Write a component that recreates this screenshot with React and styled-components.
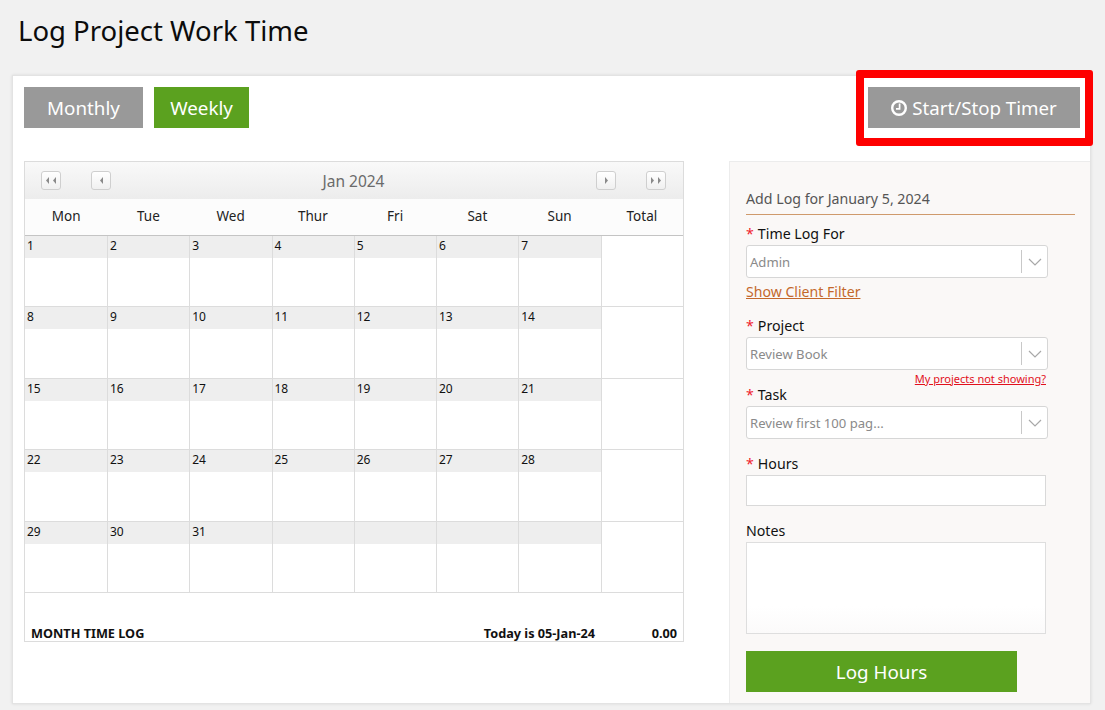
import React from 'react';
import styled, { createGlobalStyle } from 'styled-components';

const weekDays = ['Mon', 'Tue', 'Wed', 'Thur', 'Fri', 'Sat', 'Sun', 'Total'];

const weeks = [
  [1, 2, 3, 4, 5, 6, 7],
  [8, 9, 10, 11, 12, 13, 14],
  [15, 16, 17, 18, 19, 20, 21],
  [22, 23, 24, 25, 26, 27, 28],
  [29, 30, 31, '', '', '', ''],
];

const GlobalStyle = createGlobalStyle`
  html, body {
    margin: 0;
    padding: 0;
    height: 710px;
    overflow: hidden;
    background: #f1f1f1;
  }

  * {
    box-sizing: border-box;
  }
`;

const Page = styled.div`
  width: 1105px;
  height: 710px;
  overflow: hidden;
  font-family: 'Noto Sans', 'Open Sans', sans-serif;
  color: #111;
`;

const Title = styled.h1`
  margin: 0;
  height: 75px;
  padding: 12px 0 0 18px;
  font-size: 27.5px;
  line-height: 38px;
  font-weight: 400;
  color: #0c0c0c;
`;

const Card = styled.div`
  width: 1079px;
  height: 629px;
  margin-left: 12px;
  background: #fff;
  border: 1px solid #e3e3e3;
  box-shadow: 0 0 3px rgba(0, 0, 0, 0.1);
  padding: 11px 0 0 11px;
`;

const Toolbar = styled.div`
  display: flex;
  align-items: flex-start;
  gap: 11px;
  height: 74px;
  padding-right: 10px;
`;

const TabButton = styled.button`
  height: 41px;
  width: ${(p) => p.$width}px;
  border: none;
  padding: 0;
  font-family: inherit;
  font-size: 18.8px;
  color: #fff;
  background: ${(p) => (p.$active ? '#5ba11f' : '#999')};
`;

const TimerButton = styled.button`
  position: relative;
  margin-left: auto;
  width: 212px;
  height: 41px;
  border: none;
  padding: 0;
  font-family: inherit;
  font-size: 18.7px;
  color: #fff;
  background: #999;
  display: flex;
  align-items: center;
  justify-content: center;
  gap: 5px;

  &::after {
    content: '';
    position: absolute;
    top: -17px;
    left: -12px;
    right: -13px;
    bottom: -18px;
    border: 8px solid #fe0000;
    border-radius: 3px;
  }
`;

const Body = styled.div`
  display: flex;
  justify-content: space-between;
  align-items: flex-start;
`;

const Calendar = styled.div`
  width: 660px;
  height: 481px;
  border: 1px solid #dcdcdc;
`;

const CalHeader = styled.div`
  height: 37px;
  display: flex;
  align-items: center;
  padding: 0 17px 0 16px;
  background: linear-gradient(#f9f9f9, #ececec);
`;

const NavButton = styled.button`
  width: 20px;
  height: 19px;
  margin-left: ${(p) => p.$gap || 0}px;
  padding: 0;
  display: flex;
  align-items: center;
  justify-content: center;
  background: linear-gradient(#fff, #f0f0f0);
  border: 1px solid #cfcfcf;
  border-radius: 3px;
`;

const Month = styled.div`
  flex: 1;
  text-align: center;
  font-size: 15.5px;
  line-height: 20px;
  color: #6a6a6a;
`;

const WeekHeader = styled.div`
  display: grid;
  grid-template-columns: repeat(8, 82.25px);
  height: 37px;
  padding-bottom: 2px;
  align-items: center;
  background: #fcfcfc;
  border-bottom: 1px solid #c4c4c4;
  font-size: 13.5px;
  color: #222;
  text-align: center;
`;

const WeekRow = styled.div`
  display: grid;
  grid-template-columns: 83px repeat(6, 82.25px) 1fr;
  height: 71.4px;
  border-bottom: 1px solid #dcdcdc;
`;

const DayCell = styled.div`
  border-right: 1px solid #dcdcdc;
`;

const DayNumber = styled.div`
  height: 22px;
  padding-left: 2px;
  background: #eee;
  font-size: 12px;
  line-height: 20px;
  color: #111;
`;

const TotalCell = styled.div``;

const CalFooter = styled.div`
  height: 48px;
  display: flex;
  align-items: flex-end;
  padding: 0 6px;
  font-size: 12.7px;
  line-height: 15px;
  font-weight: 700;
  color: #111;
`;

const FooterToday = styled.span`
  margin-left: auto;
`;

const FooterTotal = styled.span`
  width: 82px;
  text-align: right;
`;

const SidePanel = styled.div`
  width: 361px;
  height: 542px;
  background: #faf8f7;
  border-top: 1px solid #ececec;
  border-left: 1px solid #ececec;
  padding: 27px 0 0 16px;
`;

const PanelTitle = styled.div`
  width: 329px;
  height: 26px;
  border-bottom: 1px solid #cf9a6c;
  font-size: 14.2px;
  line-height: 20px;
  color: #555;
  margin-bottom: 9px;
`;

const Field = styled.div`
  margin-bottom: ${(p) => p.$gap || 0}px;
`;

const Label = styled.div`
  font-size: 14.2px;
  line-height: 20px;
  height: 21px;
  color: #111;
`;

const Star = styled.span`
  color: #f0202a;
  margin-right: 4px;
`;

const SelectBox = styled.div`
  width: 302px;
  height: 33px;
  display: flex;
  align-items: center;
  background: #fff;
  border: 1px solid #d6d6d6;
  border-radius: 3px;
  padding-left: 3px;
  font-size: 13.1px;
  color: #8a8a8a;
`;

const SelectText = styled.span`
  flex: 1;
`;

const SelectArrow = styled.span`
  width: 26px;
  height: 23px;
  display: flex;
  align-items: center;
  justify-content: center;
  border-left: 1px solid #c8c8c8;
`;

const ClientLink = styled.a`
  display: block;
  margin-top: 4px;
  height: 20px;
  font-size: 14.1px;
  line-height: 20px;
  color: #c4682c;
  text-decoration: underline;
`;

const HelpLink = styled.a`
  display: block;
  width: 300px;
  height: 15px;
  text-align: right;
  font-size: 11px;
  line-height: 17px;
  color: #e2101c;
  text-decoration: underline;
`;

const TextInput = styled.div`
  width: 300px;
  height: 31px;
  background: #fff;
  border: 1px solid #d9d9d9;
`;

const NotesInput = styled.div`
  width: 300px;
  height: 92px;
  background: linear-gradient(#fff 70%, #fbfafa);
  border: 1px solid #dedede;
`;

const SubmitButton = styled.button`
  display: block;
  width: 271px;
  height: 41px;
  margin-top: 17px;
  border: none;
  padding: 0;
  font-family: inherit;
  font-size: 18.8px;
  color: #fff;
  background: #5ba11f;
`;

const ClockIcon = () => (
  <svg width="16" height="16" viewBox="0 0 16 16" fill="none" stroke="#fff">
    <circle cx="8" cy="8" r="6.8" strokeWidth="2.4" />
    <path d="M8.6 3.6v5.2H5" strokeWidth="1.7" />
  </svg>
);

const NavArrows = ({ dir, count }) => (
  <svg width={count * 7} height="9" viewBox={`0 0 ${count * 7} 9`} fill="#8a8a8a">
    {Array.from({ length: count }).map((_, i) => {
      const x = i * 7 + 2;
      return (
        <path
          key={i}
          d={dir === 'left' ? `M${x + 3} 1v7L${x} 4.5z` : `M${x} 1v7L${x + 3} 4.5z`}
        />
      );
    })}
  </svg>
);

const Chevron = () => (
  <svg width="14" height="8" viewBox="0 0 14 8" fill="none" stroke="#a8a8a8" strokeWidth="1.2">
    <path d="M1 1l6 6 6-6" />
  </svg>
);

const Select = ({ value }) => (
  <SelectBox>
    <SelectText>{value}</SelectText>
    <SelectArrow>
      <Chevron />
    </SelectArrow>
  </SelectBox>
);

const App = () => {
  return (
    <Page>
      <GlobalStyle />
      <Title>Log Project Work Time</Title>
      <Card>
        <Toolbar>
          <TabButton $width={119}>Monthly</TabButton>
          <TabButton $width={95} $active>Weekly</TabButton>
          <TimerButton>
            <ClockIcon />
            Start/Stop Timer
          </TimerButton>
        </Toolbar>
        <Body>
          <Calendar>
            <CalHeader>
              <NavButton><NavArrows dir="left" count={2} /></NavButton>
              <NavButton $gap={30}><NavArrows dir="left" count={1} /></NavButton>
              <Month>Jan 2024</Month>
              <NavButton><NavArrows dir="right" count={1} /></NavButton>
              <NavButton $gap={30}><NavArrows dir="right" count={2} /></NavButton>
            </CalHeader>
            <WeekHeader>
              {weekDays.map((d) => (
                <div key={d}>{d}</div>
              ))}
            </WeekHeader>
            {weeks.map((week) => (
              <WeekRow key={week[0]}>
                {week.map((n, i) => (
                  <DayCell key={i}>
                    <DayNumber>{n}</DayNumber>
                  </DayCell>
                ))}
                <TotalCell />
              </WeekRow>
            ))}
            <CalFooter>
              <span>MONTH TIME LOG</span>
              <FooterToday>Today is 05-Jan-24</FooterToday>
              <FooterTotal>0.00</FooterTotal>
            </CalFooter>
          </Calendar>
          <SidePanel>
            <PanelTitle>Add Log for January 5, 2024</PanelTitle>
            <Field $gap={14}>
              <Label><Star>*</Star>Time Log For</Label>
              <Select value="Admin" />
              <ClientLink>Show Client Filter</ClientLink>
            </Field>
            <Field>
              <Label><Star>*</Star>Project</Label>
              <Select value="Review Book" />
              <HelpLink>My projects not showing?</HelpLink>
            </Field>
            <Field $gap={15}>
              <Label><Star>*</Star>Task</Label>
              <Select value="Review first 100 pag..." />
            </Field>
            <Field $gap={15}>
              <Label><Star>*</Star>Hours</Label>
              <TextInput />
            </Field>
            <Field>
              <Label>Notes</Label>
              <NotesInput />
            </Field>
            <SubmitButton>Log Hours</SubmitButton>
          </SidePanel>
        </Body>
      </Card>
    </Page>
  );
};

export default App;
